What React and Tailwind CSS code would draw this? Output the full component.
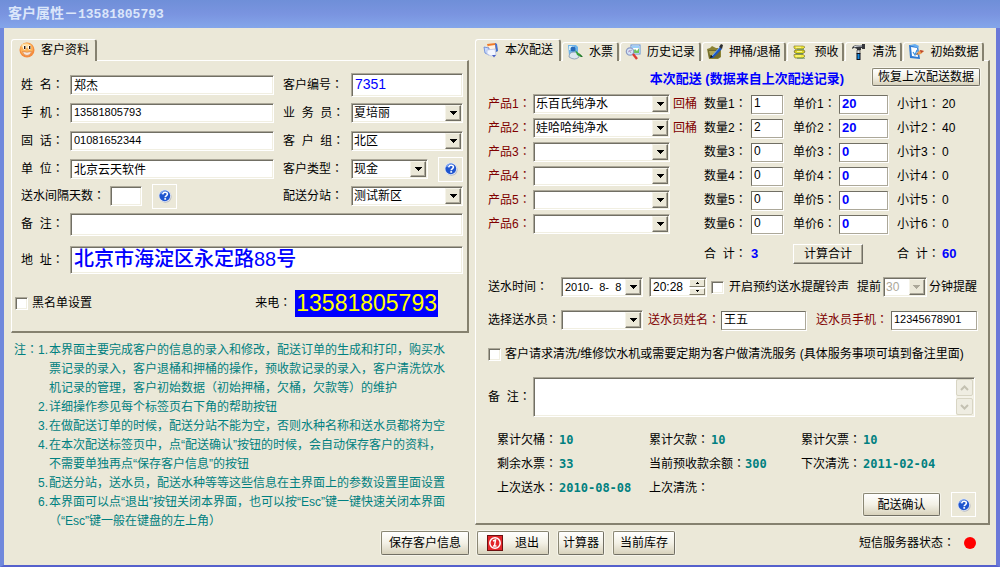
import React from "react";

const FIELD =
  "border border-t-[#aca899] border-l-[#aca899] border-r-white border-b-white bg-white shadow-[inset_1px_1px_0_#716f64,inset_-1px_-1px_0_#f1efe2]";
const THIN_FIELD =
  "border border-t-[#716f64] border-l-[#716f64] border-r-[#aca899] border-b-[#aca899] bg-white shadow-[1px_1px_0_#ffffff]";
const XP_BUTTON =
  "flex items-center justify-center rounded-[2px] border border-[#8a8774] border-r-[#716f64] border-b-[#716f64] bg-gradient-to-b from-white via-[#f3f1e6] to-[#d8d2bc] whitespace-nowrap shadow-[0_0_0_1px_#f6f4ea]";
const PANEL =
  "-mt-px border-t border-l border-r-2 border-b-2 border-t-white border-l-white border-r-[#85816f] border-b-[#85816f]";

function Label({ children, className = "", htmlFor }) {
  const cls = "whitespace-pre " + className;
  const body = (
    <>
      {children}
      <span className="font-['Noto_Sans_CJK_TC',sans-serif] leading-none">：</span>
    </>
  );
  return htmlFor ? (
    <label htmlFor={htmlFor} className={cls}>{body}</label>
  ) : (
    <span className={cls}>{body}</span>
  );
}

function Field({ id, value = "", className = "h-5 w-full text-[11px]", label }) {
  return (
    <input id={id} aria-label={label} defaultValue={value} className={"min-w-0 px-[3px] pb-[2px] outline-none " + FIELD + " " + className} />
  );
}

function ThinField({ id, value, className, label }) {
  return <input id={id} aria-label={label} defaultValue={value} className={"min-w-0 px-[2px] outline-none " + THIN_FIELD + " " + className} />;
}

function ArrowBox({ disabled }) {
  return (
    <span className="pointer-events-none absolute top-px right-px bottom-px flex w-4 items-center justify-center border border-t-[#f6f4ea] border-l-[#f6f4ea] border-r-[#716f64] border-b-[#716f64] bg-[#ebe8d8] shadow-[inset_-1px_-1px_0_#aca899]">
      <svg width="7" height="4" viewBox="0 0 7 4" shapeRendering="crispEdges">
        <path d="M0 0h7v1h-1v1h-1v1h-1v1h-1v-1h-1v-1h-1v-1h-1z" fill={disabled ? "#aca899" : "#000"} />
      </svg>
    </span>
  );
}

function Select({ id, value = "", className = "w-full", disabled, label }) {
  return (
    <div className={"relative h-5 " + FIELD + " " + className}>
      <select id={id} aria-label={label} disabled={disabled} defaultValue={value} className="block h-full w-full appearance-none bg-transparent pr-5 pb-px pl-[2px] leading-4 outline-none disabled:text-[#aca899] disabled:opacity-100">
        <option>{value}</option>
      </select>
      <ArrowBox disabled={disabled} />
    </div>
  );
}

function Check({ id }) {
  return <input id={id} type="checkbox" className={"h-[13px] w-[13px] shrink-0 appearance-none checked:bg-[#716f64] " + FIELD} />;
}

function HelpButton() {
  return (
    <button aria-label="帮助" className="flex h-[25px] w-[25px] items-center justify-center border border-white">
      <svg width="14" height="14" viewBox="0 0 14 14">
        <circle cx="7.6" cy="7.8" r="6" fill="#b9bcc4" />
        <circle cx="6.8" cy="6.8" r="6.2" fill="#dfe6f5" />
        <circle cx="6.8" cy="6.8" r="5.4" fill="#1f55cf" />
        <path d="M2.6 5a4.8 4.8 0 0 1 6-3" stroke="#7fa6f0" strokeWidth="1.2" fill="none" />
        <path d="M4.7 5.4c.2-1.6 1.2-2.2 2.4-2.2 1.400 0 2.300.8 2.300 1.900 0 1.700-2.200 1.700-2.200 3.100" stroke="#fff" strokeWidth="1.600" fill="none" />
        <rect x="6.300" y="9.100" width="1.800" height="1.600" fill="#fff" />
      </svg>
    </button>
  );
}

const ICONS = {
  smiley: (
    <>
      <circle cx="8" cy="8" r="7.500" fill="#f58b3c" />
      <circle cx="7.600" cy="7" r="6.300" fill="#fcb45a" />
      <ellipse cx="6.500" cy="3.800" rx="4" ry="2.300" fill="#ffe0a6" />
      <ellipse cx="5.500" cy="5.500" rx="1.500" ry="2.200" fill="#fff" />
      <ellipse cx="10.500" cy="5.500" rx="1.500" ry="2.200" fill="#fff" />
      <path d="M5 4h1.400v3H5zM10 4h1.400v3H10z" fill="#2c1d12" />
      <path d="M3.500 9.500q4.500 1.500 9 0-1 4-4.500 4T3.500 9.500z" fill="#fff" stroke="#d9783c" strokeWidth=".7" />
      <path d="M6 10.500v2.500M8 10.500v3M10 10.500v2.500" stroke="#e3b190" strokeWidth=".6" />
    </>
  ),
  delivery: (
    <>
      <path d="M4 2l9-1 2 8-8 2z" fill="#f07a28" />
      <path d="M5 4l7-1 1 6-6 1z" fill="#fff3e4" />
      <path d="M12 1l2 1 1 7-2 1z" fill="#3f74d8" />
      <path d="M1 5l5 1v7l-4-2z" fill="#c9dcff" stroke="#5f82d6" strokeWidth=".8" />
      <path d="M4 8l8-1 1 6-5 1-4-2z" fill="#f4f7ff" stroke="#b4c0e4" strokeWidth=".8" />
      <path d="M9 13l2 2.500 2-2.500z" fill="#4a62c8" />
    </>
  ),
  ticket: (
    <>
      <path d="M1 1h8l2 2v8H2z" fill="#6db4ea" />
      <path d="M2 2h5v4H2z" fill="#d9f1fb" />
      <circle cx="6" cy="5" r="2.500" fill="#2769b9" />
      <path d="M2 13q0-5 5-5t5 5q-4 4-10 0z" fill="#dce6ef" stroke="#7e93ac" strokeWidth=".8" />
      <path d="M8 6l7 6-1 1-4-2z" fill="#36a13c" />
      <path d="M12 9l4 4-2 0z" fill="#20702b" />
    </>
  ),
  history: (
    <>
      <rect x="6" y="1" width="9" height="9" fill="#fff" stroke="#5f91d8" />
      <path d="M7 9l3-4 2 2 2-3v5z" fill="#6fc45d" />
      <path d="M7 2h7v2H7z" fill="#9ad0fa" />
      <circle cx="5" cy="7.500" r="3.700" fill="#d5e6f9" stroke="#8d9bc4" strokeWidth="1.200" />
      <path d="M4 6l2 3M3 8l4-2" stroke="#b08ab8" strokeWidth=".8" />
      <path d="M8 10l4 5" stroke="#dc3b32" strokeWidth="2.400" />
    </>
  ),
  barrel: (
    <>
      <path d="M0 5l3-1 2-2 4 2h5v9l-3 2H2z" fill="#8b8334" />
      <path d="M1 6h12v7l-2 1H2z" fill="#6f6a2e" />
      <path d="M2 7h7v4H3z" fill="#b2a958" />
      <path d="M3 14L13 3l2 2L6 14z" fill="#1b56c4" />
      <path d="M5 12l8-9" stroke="#79b1ff" strokeWidth=".9" />
      <path d="M12 3l2-3 2 1-1 4z" fill="#2d2d2d" />
      <path d="M3 14l1-3 2 2z" fill="#111" />
    </>
  ),
  prepaid: (
    <>
      <path d="M2 2h9l2 1-2 2H3L2 4z" fill="#f2e72e" stroke="#88813a" strokeWidth=".7" />
      <path d="M3 6h9l1 2-2 1.500H4L2 8z" fill="#dcd61f" stroke="#666035" strokeWidth=".7" />
      <path d="M2 10.500h9l2 1.500-2 2H3l-1-2z" fill="#f4ed3d" stroke="#77713b" strokeWidth=".7" />
      <path d="M5 5.200h7M4 9.700h7M5 14.200h8" stroke="#5b8a58" strokeWidth=".8" />
      <path d="M4 3.300h5M5 7.500h5M4 12h5" stroke="#fffcb5" strokeWidth=".8" />
    </>
  ),
  hammer: (
    <>
      <path d="M2 4q1-3 6-3h4v-1h3v5h-3V4h-1v2H7V5Q4 3 2 5z" fill="#35373c" />
      <path d="M4 3q3-1.500 8-1" stroke="#d8dce2" strokeWidth="1.200" fill="none" />
      <path d="M7 6h3v4H7z" fill="#d9dde2" stroke="#222" strokeWidth=".6" />
      <path d="M6.500 9h4v7h-4z" fill="#0d0f1a" />
      <path d="M7.500 10h2v5h-2z" fill="#138be0" />
    </>
  ),
  initial: (
    <>
      <path d="M1 1l9 1 2 13-10-1z" fill="#2f7bd3" />
      <path d="M3 3l6 1 1 9-6-1z" fill="#fff" />
      <path d="M2 1l5-1 4 2-1 2z" fill="#66adf0" />
      <path d="M5 8l2 3 2-5" stroke="#3c91dd" strokeWidth="1.200" fill="none" />
      <path d="M8 10l4-4 4 1-3 3-4 1z" fill="#f0a052" />
      <path d="M12 6l4 1-3 2z" fill="#b9432f" />
      <path d="M8 11l1-2 1 1z" fill="#23407d" />
    </>
  ),
};

function Icon({ name }) {
  return <svg width="16" height="16" viewBox="0 0 16 16" className="shrink-0">{ICONS[name]}</svg>;
}

function Tab({ icon, children, active }) {
  return (
    <button
      role="tab"
      aria-selected={!!active}
      className={
        "flex items-center gap-[6px] whitespace-nowrap rounded-t-[3px] border-t border-l border-r-2 border-t-white border-l-white border-r-[#85816f] bg-[#ebe8d8] " +
        (active ? "relative z-10 h-[22px] pr-[6px] pb-[2px] pl-[7px]" : "h-[19px] px-1")
      }
    >
      <Icon name={icon} />
      <span>{children}</span>
    </button>
  );
}

const PRODUCTS = [
  { name: "乐百氏纯净水", back: true, qty: "1", price: "20", sum: "20" },
  { name: "娃哈哈纯净水", back: true, qty: "2", price: "20", sum: "40" },
  { name: "", qty: "0", price: "0", sum: "0" },
  { name: "", qty: "0", price: "0", sum: "0" },
  { name: "", qty: "0", price: "0", sum: "0" },
  { name: "", qty: "0", price: "0", sum: "0" },
];

const NOTES = [
  ["1.", "本界面主要完成客户的信息的录入和修改，配送订单的生成和打印，购买水"],
  ["", "票记录的录入，客户退桶和押桶的操作，预收款记录的录入，客户清洗饮水"],
  ["", "机记录的管理，客户初始数据（初始押桶，欠桶，欠款等）的维护"],
  ["2.", "详细操作参见每个标签页右下角的帮助按钮"],
  ["3.", "在做配送订单的时候，配送分站不能为空，否则水种名称和送水员都将为空"],
  ["4.", "在本次配送标签页中，点“配送确认”按钮的时候，会自动保存客户的资料，"],
  ["", "不需要单独再点“保存客户信息”的按钮"],
  ["5.", "配送分站，送水员，配送水种等等这些信息在主界面上的参数设置里面设置"],
  ["6.", "本界面可以点“退出”按钮关闭本界面，也可以按“Esc”键一键快速关闭本界面"],
  ["", "（“Esc”键一般在键盘的左上角）"],
];

const ROW = "grid h-7 grid-cols-[49px_minmax(0,1fr)_77px_112px] items-center";

function CustomerPanel() {
  return (
    <section>
      <div role="tablist" className="flex h-[22px] items-end">
        <Tab icon="smiley" active>客户资料</Tab>
      </div>
      <div className={PANEL + " pt-[10px] pr-1 pb-[6px] pl-[9px]"}>
        <div className={ROW}>
          <Label htmlFor="name">姓  名</Label>
          <Field id="name" value="郑杰" className="h-5 text-xs" />
          <Label htmlFor="no" className="pl-[9px]">客户编号</Label>
          <Field id="no" value="7351" className="h-6 text-sm text-[#0000ff]" />
        </div>
        <div className={ROW}>
          <Label htmlFor="mobile">手  机</Label>
          <Field id="mobile" value="13581805793" />
          <Label htmlFor="sales" className="pl-[9px]">业  务  员</Label>
          <Select id="sales" value="夏培丽" />
        </div>
        <div className={ROW}>
          <Label htmlFor="tel">固  话</Label>
          <Field id="tel" value="01081652344" />
          <Label htmlFor="group" className="pl-[9px]">客  户  组</Label>
          <Select id="group" value="北区" />
        </div>
        <div className={ROW}>
          <Label htmlFor="unit">单  位</Label>
          <Field id="unit" value="北京云天软件" className="h-5 text-xs" />
          <Label htmlFor="type" className="pl-[9px]">客户类型</Label>
          <div className="flex items-center justify-between">
            <Select id="type" value="现金" className="w-[77px]" />
            <HelpButton />
          </div>
        </div>
        <div className="flex h-[26px] items-center">
          <Label htmlFor="days" className="w-[89px]">送水间隔天数</Label>
          <Field id="days" className="h-5 w-8" />
          <div className="flex flex-1 pl-[10px]"><HelpButton /></div>
          <Label htmlFor="station" className="w-[68px]">配送分站</Label>
          <Select id="station" value="测试新区" className="w-28" />
        </div>
        <div className="flex h-[30px] items-center">
          <Label htmlFor="memo" className="w-[49px]">备  注</Label>
          <Field id="memo" className="h-[23px] flex-1" />
        </div>
        <div className="flex h-[42px] items-center">
          <Label htmlFor="addr" className="w-[49px]">地  址</Label>
          <Field id="addr" value="北京市海淀区永定路88号" className="h-7 flex-1 text-xl font-medium text-[#0000ff]" />
        </div>
        <div className="-ml-[6px] flex h-11 items-center">
          <Check id="black" />
          <label htmlFor="black" className="pl-1">黑名单设置</label>
          <Label className="ml-auto w-10">来电</Label>
          <span className="mr-[25px] bg-[#0000ff] px-px text-[23px] leading-[27px] text-[#ffff00]">13581805793</span>
        </div>
      </div>
    </section>
  );
}

const PROW = "grid grid-cols-[45px_minmax(0,1fr)_34px_47px_42px_46px_58px_45px_38px] items-center";

function DeliveryPanel() {
  return (
    <section>
      <div role="tablist" className="flex h-[22px] items-end gap-px">
        <Tab icon="delivery" active>本次配送</Tab>
        <Tab icon="ticket">水票</Tab>
        <Tab icon="history">历史记录</Tab>
        <Tab icon="barrel">押桶/退桶</Tab>
        <Tab icon="prepaid">预收</Tab>
        <Tab icon="hammer">清洗</Tab>
        <Tab icon="initial">初始数据</Tab>
      </div>
      <div className={PANEL + " pt-[5px] pr-2 pb-[6px] pl-3"}>
        <div className="flex h-[26px] items-center justify-end gap-7">
          <h2 className="text-[13px] font-bold text-[#0000ff]">本次配送 (数据来自上次配送记录)</h2>
          <button className={XP_BUTTON + " mb-1 h-[18px] w-[108px]"}>恢复上次配送数据</button>
        </div>
        {PRODUCTS.map((p, i) => (
          <div key={i} className={PROW + " h-6"}>
            <Label htmlFor={"p" + i} className="text-[#800000]">产品{i + 1}</Label>
            <Select id={"p" + i} value={p.name} />
            <span className="pl-[3px] text-[#800000]">{p.back ? "回桶" : ""}</span>
            <Label htmlFor={"q" + i}>数量{i + 1}</Label>
            <ThinField id={"q" + i} value={p.qty} className="h-[19px] w-8 pb-[2px] text-xs" />
            <Label htmlFor={"r" + i}>单价{i + 1}</Label>
            <ThinField id={"r" + i} value={p.price} className="h-[19px] w-[49px] pb-[2px] text-[13px] font-bold text-[#0000ff]" />
            <Label>小计{i + 1}</Label>
            <span>{p.sum}</span>
          </div>
        ))}
        <div className={PROW + " h-9"}>
          <span className="col-span-3" />
          <Label>合  计</Label>
          <b className="text-[13px] text-[#0000ff]">3</b>
          <div className="col-span-2">
            <button className="h-5 w-[70px] border border-t-white border-l-white border-r-[#716f64] border-b-[#716f64] leading-4 shadow-[inset_-1px_-1px_0_#aca899]">计算合计</button>
          </div>
          <Label>合  计</Label>
          <b className="text-[13px] text-[#0000ff]">60</b>
        </div>
        <div className="flex h-[30px] items-center">
          <Label htmlFor="date" className="w-[73px]">送水时间</Label>
          <div className={"relative h-5 w-[82px] " + FIELD}>
            <input id="date" defaultValue="2010-  8-  8" className="h-full w-full bg-transparent pb-px pl-[3px] pr-4 text-[11px] outline-none" />
            <ArrowBox />
          </div>
          <div className={"ml-[6px] flex h-5 w-[58px] " + FIELD}>
            <input aria-label="时间" defaultValue="20:28" className="h-full min-w-0 flex-1 bg-transparent pb-px pl-[3px] text-xs outline-none" />
            <span className="m-px flex w-4 flex-col gap-px">
              <button aria-label="增加" className="flex flex-1 items-center justify-center border border-t-white border-l-white border-r-[#85816f] border-b-[#85816f] bg-[#ebe8d8]">
                <svg width="3" height="2" shapeRendering="crispEdges"><path d="M1 0h1v1h1v1H0V1h1z" /></svg>
              </button>
              <button aria-label="减少" className="flex flex-1 items-center justify-center border border-t-white border-l-white border-r-[#85816f] border-b-[#85816f] bg-[#ebe8d8]">
                <svg width="3" height="2" shapeRendering="crispEdges"><path d="M0 0h3v1H2v1H1V1H0z" /></svg>
              </button>
            </span>
          </div>
          <span className="flex flex-1 items-center gap-[5px] pl-1">
            <Check id="ring" />
            <label htmlFor="ring" className="whitespace-nowrap">开启预约送水提醒铃声</label>
          </span>
          <label htmlFor="ahead" className="pr-[2px]">提前</label>
          <Select id="ahead" value="30" disabled className="w-11" />
          <span className="pr-[3px] pl-[2px] whitespace-nowrap">分钟提醒</span>
        </div>
        <div className="flex h-9 items-center">
          <Label htmlFor="worker" className="w-[73px]">选择送水员</Label>
          <Select id="worker" className="w-[82px]" />
          <Label htmlFor="wname" className="ml-[5px] w-[73px] text-[#800000]">送水员姓名</Label>
          <ThinField id="wname" value="王五" className="h-[19px] flex-1 pb-[3px]" />
          <Label htmlFor="wphone" className="ml-[10px] w-[75px] text-[#800000]">送水员手机</Label>
          <ThinField id="wphone" value="12345678901" className="mr-[3px] h-[19px] w-[86px] pb-[2px] text-[11px]" />
        </div>
        <div className="flex h-8 items-center gap-1">
          <Check id="clean" />
          <label htmlFor="clean" className="whitespace-nowrap">客户请求清洗/维修饮水机或需要定期为客户做清洗服务 (具体服务事项可填到备注里面)</label>
        </div>
        <div className="flex h-[54px] items-center">
          <Label htmlFor="remark" className="w-[45px]">备  注</Label>
          <div className={"mr-[5px] flex h-10 flex-1 p-px " + FIELD}>
            <textarea id="remark" className="h-full min-w-0 flex-1 resize-none bg-transparent outline-none" />
            <span className="flex w-[17px] flex-col justify-between bg-[#f4f2e8]">
              <button aria-label="向上" className="flex h-[17px] items-center justify-center rounded-[2px] border border-[#d8d5c4] bg-[#efede2]">
                <svg width="9" height="6" viewBox="0 0 9 6"><path d="M1 5l3.500-3.500L8 5" stroke="#c4c1b2" strokeWidth="2" fill="none" /></svg>
              </button>
              <button aria-label="向下" className="flex h-[17px] items-center justify-center rounded-[2px] border border-[#d8d5c4] bg-[#efede2]">
                <svg width="9" height="6" viewBox="0 0 9 6"><path d="M1 1l3.500 3.500L8 1" stroke="#c4c1b2" strokeWidth="2" fill="none" /></svg>
              </button>
            </span>
          </div>
        </div>
        <div className="grid grid-cols-[152px_152px_minmax(0,1fr)] pt-1 pl-[9px] leading-6">
          <Stat label="累计欠桶" value="10" />
          <Stat label="累计欠款" value="10" />
          <Stat label="累计欠票" value="10" />
          <Stat label="剩余水票" value="33" />
          <Stat label="当前预收款余额" value="300" tight />
          <Stat label="下次清洗" value="2011-02-04" />
          <Stat label="上次送水" value="2010-08-08" />
          <Stat label="上次清洗" value="" />
          <div className="flex items-center justify-end gap-[11px] pt-4 pr-1 leading-4">
            <button className={XP_BUTTON + " h-[23px] w-[77px]"}>配送确认</button>
            <HelpButton />
          </div>
        </div>
      </div>
    </section>
  );
}

function Stat({ label, value, tight }) {
  return (
    <div className={"flex h-6 whitespace-nowrap " + (tight ? "" : "gap-[2px]")}>
      <Label>{label}</Label>
      <b className="font-['DejaVu_Sans_Mono','Liberation_Mono',monospace] text-xs leading-6 text-[#008080]">{value}</b>
    </div>
  );
}

export default function App() {
  return (
    <div className="min-h-screen bg-white font-['Liberation_Sans','Noto_Sans_CJK_SC',sans-serif] text-xs leading-4 text-black">
      <div className="border-r-4 border-b-2 border-l-4 border-r-[#6a78d8] border-b-[#5560cc] border-l-[#7088dc] bg-[#ebe8d8]">
        <header className="-mx-1 flex h-7 items-center bg-gradient-to-b from-[#6f8fd8] via-[#7a94e0] to-[#84a6ea] pl-2 text-sm font-bold text-[#dbe6fa]">
          <h1>
            客户属性－<span className="font-['Liberation_Mono',monospace] text-[13px]">13581805793</span>
          </h1>
        </header>
        <main className="flex gap-[6px] pt-[11px] pr-[6px] pl-[7px]">
          <div className="min-w-0 flex-[458]">
            <CustomerPanel />
            <div className="mt-2 flex pl-[3px] leading-[19px] whitespace-nowrap text-[#008080]">
              <Label className="w-6">注</Label>
              <div>
                {NOTES.map(([n, text], i) => (
                  <p key={i} className="flex h-[19px]">
                    <span className="w-[11px]">{n}</span>
                    <span>{text}</span>
                  </p>
                ))}
              </div>
            </div>
          </div>
          <div className="min-w-0 flex-[515]">
            <DeliveryPanel />
          </div>
        </main>
        <footer className="flex gap-[6px] pr-[6px] pb-[10px] pl-[7px]">
          <div className="flex min-w-0 flex-[458] justify-end">
            <button className={XP_BUTTON + " h-6 w-[88px]"}>保存客户信息</button>
          </div>
          <div className="min-w-0 flex-[515]">
            <div className="flex items-center gap-[9px] pr-[14px] pl-[2px]">
              <button className={XP_BUTTON + " h-6 w-[72px] gap-3"}>
                <svg width="16" height="16" viewBox="0 0 16 16">
                  <rect width="16" height="16" fill="#6d1010" />
                  <rect x="1" y="1" width="14" height="14" fill="#e3262a" />
                  <circle cx="8" cy="8" r="5.200" fill="none" stroke="#fff" strokeWidth="1.500" />
                  <path d="M6 6l2.500-1L7.500 11M6 11h3.500" stroke="#fff" strokeWidth="1.500" fill="none" />
                </svg>
                退出
              </button>
              <button className={XP_BUTTON + " h-6 w-[46px]"}>计算器</button>
              <button className={XP_BUTTON + " h-6 w-[62px]"}>当前库存</button>
              <Label className="ml-auto">短信服务器状态</Label>
              <span className="h-3 w-3 rounded-full bg-[#ff0000]" />
            </div>
          </div>
        </footer>
      </div>
    </div>
  );
}
